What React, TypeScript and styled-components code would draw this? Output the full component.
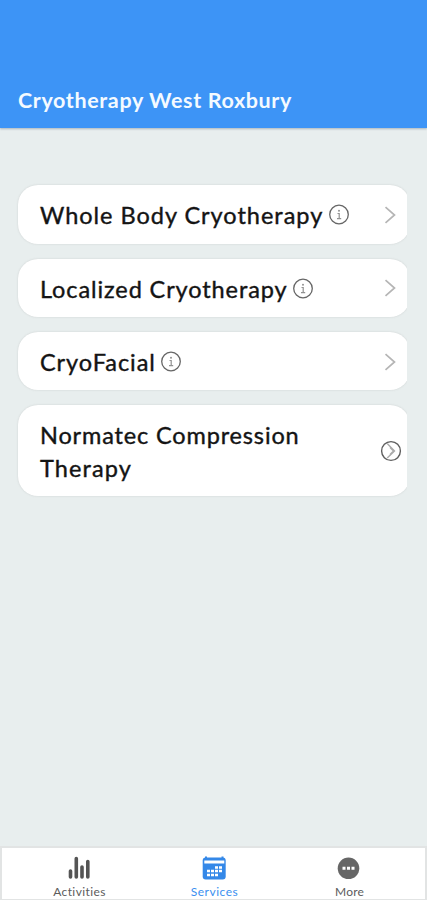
import React from "react";
import styled, { createGlobalStyle } from "styled-components";

const GlobalStyle = createGlobalStyle`
  *, *::before, *::after { box-sizing: border-box; }
  body { margin: 0; background: #e8eeef; font-family: Lato, "Open Sans", sans-serif; }
`;

const Screen = styled.div`
  width: 427px;
  height: 900px;
  display: flex;
  flex-direction: column;
  overflow: hidden;
  background: #e8eeee;
`;

const Header = styled.header`
  flex: none;
  height: 128px;
  padding: 0 18px 14px;
  display: flex;
  align-items: flex-end;
  background: #3d94f6;
  box-shadow: 0 1px 2px rgba(90, 110, 130, 0.45);
`;

const Title = styled.h1`
  margin: 0;
  font-size: 21.5px;
  line-height: 28px;
  font-weight: 700;
  letter-spacing: 0.63px;
  color: #f4faff;
  white-space: nowrap;
`;

const Services = styled.main`
  flex: 1;
  width: 407px;
  padding: 57px 0 0 18px;
  display: flex;
  flex-direction: column;
  gap: 15px;
  overflow: hidden;
`;

const Card = styled.button<{ $height: number }>`
  flex: none;
  width: 392px;
  height: ${(p) => p.$height}px;
  padding: 0 8px 0 22px;
  display: flex;
  align-items: center;
  border: 0;
  border-radius: 20px;
  background: #fff;
  box-shadow: 0 0 2px rgba(120, 120, 120, 0.25);
  font-family: inherit;
  color: #141414;
  text-align: left;
`;

const Lines = styled.span`
  display: flex;
  flex-direction: column;
  align-items: flex-start;
  padding-top: 3px;
`;

const Name = styled.span<{ $tracking: number }>`
  font-size: 23.5px;
  line-height: 33px;
  font-weight: 400;
  letter-spacing: ${(p) => p.$tracking}px;
  -webkit-text-stroke: 0.4px #141414;
  white-space: nowrap;
`;

const InfoIcon = styled.svg`
  flex: none;
  width: 22px;
  height: 22px;
  margin: 2px 0 0 4.5px;
`;

const Trailing = styled.svg`
  flex: none;
  width: 22px;
  height: 22px;
  margin: 1px 0 0 auto;
`;

const TabBar = styled.nav`
  flex: none;
  height: 54px;
  padding: 0 9px 0 10px;
  display: grid;
  grid-template-columns: repeat(3, 135px);
  background: #fff;
  border: 2px solid #e2e4e4;
  border-bottom-width: 1px;
`;

const Tab = styled.button<{ $active?: boolean }>`
  padding: 6px 0 0;
  display: flex;
  flex-direction: column;
  align-items: center;
  border: 0;
  background: none;
  font-family: inherit;
  color: ${(p) => (p.$active ? "#3a8ff0" : "#5c5c5c")};
`;

const TabIcon = styled.svg`
  width: 28px;
  height: 28px;
`;

const TabLabel = styled.span<{ $tracking: number }>`
  margin-top: 2px;
  font-size: 12px;
  line-height: 15px;
  letter-spacing: ${(p) => p.$tracking}px;
`;

interface Service {
  lines: { text: string; tracking: number }[];
  height: number;
  circled?: boolean;
}

const services: Service[] = [
  { lines: [{ text: "Whole Body Cryotherapy", tracking: 0.98 }], height: 58.5 },
  { lines: [{ text: "Localized Cryotherapy", tracking: 0.9 }], height: 58.5 },
  { lines: [{ text: "CryoFacial", tracking: 0.95 }], height: 58 },
  {
    lines: [
      { text: "Normatec Compression", tracking: 0.85 },
      { text: "Therapy", tracking: 1.1 },
    ],
    height: 91,
    circled: true,
  },
];

function Info() {
  return (
    <InfoIcon viewBox="0 0 22 22" fill="none">
      <circle cx="11" cy="10.5" r="9.3" stroke="#666" strokeWidth="1.3" />
      <circle cx="11" cy="6.7" r="1" fill="#929292" />
      <path d="M9.5 9.5h1.7v5M9 14.7h4.2" stroke="#929292" strokeWidth="1.2" />
    </InfoIcon>
  );
}

function Chevron({ circled }: { circled?: boolean }) {
  return (
    <Trailing viewBox="0 0 22 22" fill="none">
      {circled && <circle cx="11" cy="11" r="9.4" stroke="#5e5e5e" strokeWidth="1.4" />}
      {circled ? (
        <path d="M7.2 3.5 14.5 11l-7.3 7M10 7.5l3.5 3.5-3.5 3.5" stroke="#aaa" strokeWidth="1.4" />
      ) : (
        <path d="M5.5 3.2 14.5 11 5.5 18.8" stroke="#b5b5b5" strokeWidth="1.7" />
      )}
    </Trailing>
  );
}

export default function App() {
  return (
    <Screen>
      <GlobalStyle />
      <Header>
        <Title>Cryotherapy West Roxbury</Title>
      </Header>
      <Services>
        {services.map((s) => (
          <Card key={s.lines[0].text} $height={s.height}>
            <Lines>
              {s.lines.map((l) => (
                <Name key={l.text} $tracking={l.tracking}>{l.text}</Name>
              ))}
            </Lines>
            {!s.circled && <Info />}
            <Chevron circled={s.circled} />
          </Card>
        ))}
      </Services>
      <TabBar>
        <Tab>
          <TabIcon viewBox="0 0 28 28">
            <path
              d="M4.5 23v-6M10.3 23V4.500M16 23V13M21.800 23V7.500"
              stroke="#555"
              strokeWidth="3.6"
              strokeLinecap="round"
            />
          </TabIcon>
          <TabLabel $tracking={0.4}>Activities</TabLabel>
        </Tab>
        <Tab $active>
          <TabIcon viewBox="0 0 28 28">
            <rect x="1.7" y="3.5" width="23" height="22" rx="3" fill="#3488e8" />
            <path d="M5 2.5v4M21.500 2.500v4" stroke="#3488e8" strokeWidth="2" />
            <path d="M3.300 8h20" stroke="#fff" strokeWidth="3" />
            <path d="M14 13.500h7M6 17h15M6 21h11" stroke="#fff" strokeWidth="2.300" strokeDasharray="3 1" />
          </TabIcon>
          <TabLabel $tracking={0.5}>Services</TabLabel>
        </Tab>
        <Tab>
          <TabIcon viewBox="0 0 28 28">
            <circle cx="12.5" cy="14.3" r="10.8" fill="#666" />
            <path d="M6.500 14.300h12" stroke="#fff" strokeWidth="3" strokeDasharray="3 1.5" />
          </TabIcon>
          <TabLabel $tracking={0.2}>More</TabLabel>
        </Tab>
      </TabBar>
    </Screen>
  );
}
